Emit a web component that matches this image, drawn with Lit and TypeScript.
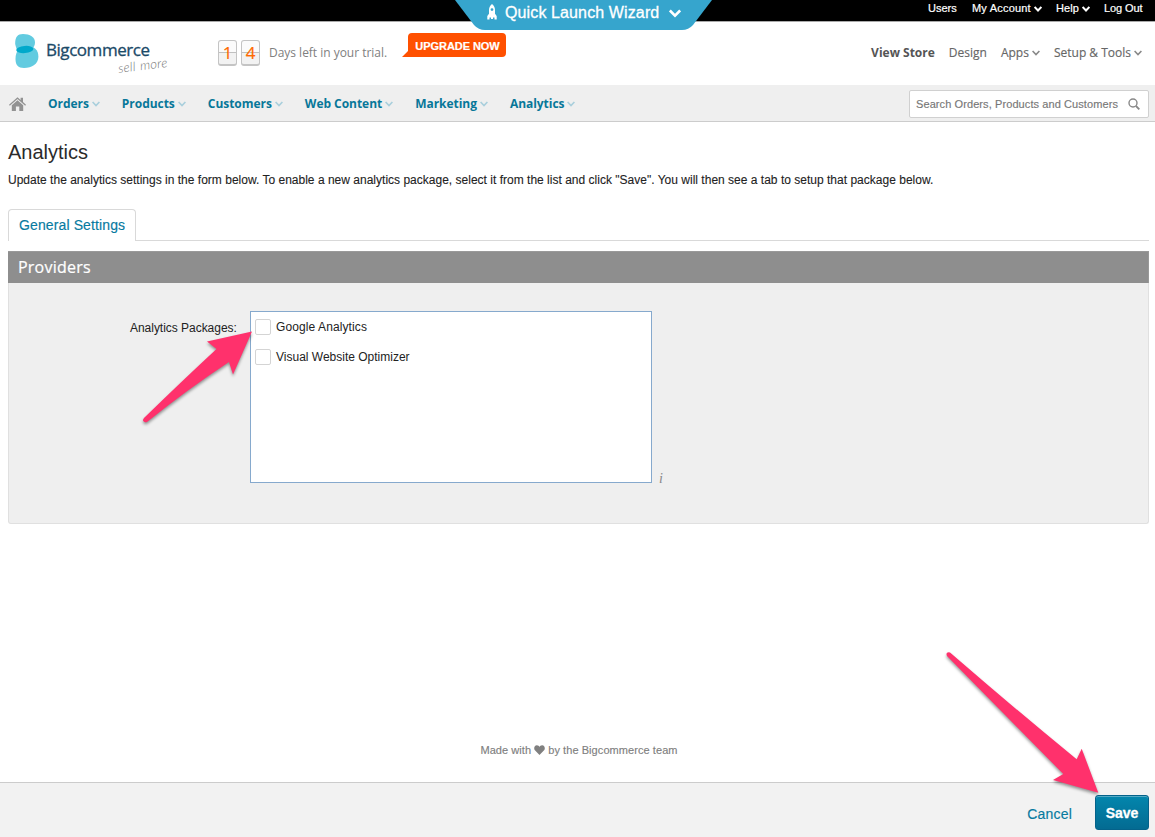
import { LitElement, html, css, svg } from "lit";
import { customElement, property } from "lit/decorators.js";

@customElement("chevron-icon")
class ChevronIcon extends LitElement {
  @property({ type: Number }) size = 8;
  @property({ type: Number }) weight = 2;
  static styles = css`
    :host { display: inline-flex; flex: none; }
    .stroke { fill: none; stroke: currentColor; }
  `;
  render() {
    return html`<svg width=${this.size} height=${this.size * 0.75} viewBox="0 0 8 6">
      <path class="stroke" stroke-width=${this.weight} d="M0.600 1 L4 4.500 L7.400 1" />
    </svg>`;
  }
}

@customElement("top-bar")
class TopBar extends LitElement {
  static styles = css`
    :host { display: block; position: relative; }
    .bar {
      height: 21px; background: #000; border-bottom: 1px solid #aaa; box-sizing: content-box;
      display: flex; justify-content: flex-end; gap: 14px; padding-right: 12px;
      font-size: 11px; line-height: 17px; color: #fff; -webkit-text-stroke: 0.2px #fff;
    }
    .item { display: flex; gap: 3px; white-space: nowrap; height: 17px; }
    .item chevron-icon { padding-top: 6px; }
    .users { width: 30px; }
    .account { width: 70px; }
    .account .label { letter-spacing: 0.2px; }
    .help { width: 34px; }
    .help .label { letter-spacing: 0.1px; }
    .logout { width: 39px; }
    .logout .label { letter-spacing: -0.1px; }
    .wizard {
      position: absolute; left: 455px; top: 0; width: 257px; height: 31px;
    }
    .shape { position: absolute; left: 0; top: 0; }
    .wizard-row {
      position: relative; display: flex; align-items: center; height: 26px; padding-left: 32px;
      color: #fff; font-size: 16px; letter-spacing: 0.12px; -webkit-text-stroke: 0.3px #fff;
    }
    .rocket { margin-right: 8px; margin-top: -3px; }
    .wizard-row chevron-icon { margin-left: 10px; padding-top: 1px; }
  `;
  render() {
    return html`
      <div class="bar">
        <div class="item users"><span class="label">Users</span></div>
        <div class="item account"><span class="label">My Account</span><chevron-icon size="8"></chevron-icon></div>
        <div class="item help"><span class="label">Help</span><chevron-icon size="8"></chevron-icon></div>
        <div class="item logout"><span class="label">Log Out</span></div>
      </div>
      <div class="wizard">
        <svg class="shape" width="257" height="31" viewBox="0 0 257 31">
          <path fill="#36a5cd" d="M0 0 H257 L238 25 Q233.500 30 227 30 H30 Q23.500 30 19 25 Z" />
        </svg>
        <div class="wizard-row">
          <svg class="rocket" width="10" height="16" viewBox="0 0 10 16">
            <path fill="#fff" fill-rule="evenodd" d="M5 0 C7 1.600 8 3.600 8 6 V9.700 L9.700 12 V15.500 H7.500 V13.600 H6 V15 H4 V13.600 H2.500 V15.500 H0.300 V12 L2 9.700 V6 C2 3.600 3 1.600 5 0 Z M5 4.200 A1.400 1.400 0 1 0 5 7 A1.400 1.400 0 1 0 5 4.200 Z" />
          </svg>
          <span>Quick Launch Wizard</span>
          <chevron-icon size="12" weight="1.700"></chevron-icon>
        </div>
      </div>
    `;
  }
}

@customElement("store-header")
class StoreHeader extends LitElement {
  static styles = css`
    :host {
      display: flex; height: 63px; box-sizing: border-box; background: #fff;
      font-family: "Open Sans", sans-serif; color: #666;
    }
    .logo { flex: none; width: 217px; display: flex; }
    .mark { flex: none; margin: 11px 0 0 14px; }
    .words { display: flex; flex-direction: column; padding: 16px 0 0 6px; }
    .name { font-size: 17px; line-height: 24px; color: #1b4a68; letter-spacing: -0.45px; -webkit-text-stroke: 0.3px #1b4a68; }
    .tag {
      font-family: "Lato", sans-serif; font-style: italic; font-weight: 300; font-size: 13px; line-height: 14px; color: #777;
      margin: -4px 0 0 72px; transform: rotate(-7deg); letter-spacing: 0.2px; word-spacing: 1px; white-space: nowrap;
    }
    .trial { display: flex; flex: none; width: 185px; padding: 18px 0 0 1px; box-sizing: border-box; }
    .digit {
      box-sizing: border-box; width: 19px; height: 26px; margin-right: 4px; border: 1px solid #c4c4c4; border-bottom-width: 2px;
      border-radius: 3px; background: linear-gradient(#fbfbfb 0 11px, #c0c0c0 11px 12px, #f2f2f2 12px);
      color: #ff6a00; font-size: 17px; line-height: 23px; text-align: center; -webkit-text-stroke: 0.2px #ff6a00;
    }
    .digit:last-of-type { margin-right: 0; }
    .left { font-size: 12px; line-height: 26px; padding-left: 9px; letter-spacing: -0.02px; white-space: nowrap; color: #808080; }
    .upgrade { position: relative; width: 105px; height: 25px; margin: 11px 0 0; }
    .bubble { display: block; }
    .upgrade-label {
      position: absolute; left: 7px; top: 0; width: 97px; height: 24px; text-align: center;
      font: bold 11px/26px "Liberation Sans", sans-serif; color: #fff; letter-spacing: -0.05px; white-space: nowrap;
      -webkit-text-stroke: 0.2px #fff;
    }
    .links { margin-left: auto; display: flex; padding: 22px 13px 0 0; gap: 14px; font-size: 12px; line-height: 18px; white-space: nowrap; }
    .link { display: flex; gap: 3px; -webkit-text-stroke: 0.15px #666; }
    .link chevron-icon { padding-top: 6px; color: #888; }
    .strong { font-weight: 700; color: #555; -webkit-text-stroke: 0; }
  `;
  render() {
    return html`
      <div class="logo">
        <svg class="mark" width="26" height="36" viewBox="0 0 26 36">
          <path fill="#62cbe0" d="M1.200 11 C1 4 3.500 1 9 1 C16 1 21 4 21 9.500 C21 15 16 19 9 19.500 C4 19.700 2.500 17 1.200 11 Z" />
          <path fill="#62cbe0" d="M1.500 26 C1.500 18 6 12.800 13 12.800 C20 12.800 24.400 17 24.400 23.500 C24.400 31 18 35 10 35 C4 35 1.500 32 1.500 26 Z" />
          <ellipse cx="10.800" cy="16.500" rx="8.600" ry="3.600" fill="#00a9cb" transform="rotate(-5 10.800 16.500)" />
        </svg>
        <div class="words"><span class="name">Bigcommerce</span><span class="tag">sell more</span></div>
      </div>
      <div class="trial">
        <div class="digit">1</div>
        <div class="digit">4</div>
        <span class="left">Days left in your trial.</span>
      </div>
      <div class="upgrade">
        <svg class="bubble" width="105" height="25" viewBox="0 0 105 25">
          <path fill="#ff5000" d="M6 4 Q6 0 10 0 H100 Q104 0 104 4 V20 Q104 24 100 24 H0 L6 18 Z" />
        </svg>
        <span class="upgrade-label">UPGRADE NOW</span>
      </div>
      <div class="links">
        <span class="link strong">View Store</span>
        <span class="link">Design</span>
        <span class="link">Apps<chevron-icon size="8" weight="1.600"></chevron-icon></span>
        <span class="link">Setup &amp; Tools<chevron-icon size="8" weight="1.600"></chevron-icon></span>
      </div>
    `;
  }
}

@customElement("main-nav")
class MainNav extends LitElement {
  static styles = css`
    :host {
      display: flex; align-items: center; height: 37px; box-sizing: border-box; background: #efefef;
      border-bottom: 1px solid #ccc; padding: 2px 6px 0 9px;
    }
    .home { flex: none; margin: 0 22px 0 0; }
    .items { display: flex; gap: 22px; font: bold 12px/18px "Open Sans", sans-serif; color: #077799; letter-spacing: -0.04px; }
    .item { display: flex; gap: 3px; white-space: nowrap; }
    .item chevron-icon { color: #a9cfdc; padding-top: 6px; }
    .search {
      margin-left: auto; width: 240px; height: 28px; box-sizing: border-box; border: 1px solid #d0d0d0; background: #fff;
      border-radius: 2px; display: flex; align-items: center; justify-content: space-between; padding: 0 8px 1px 6px;
      font-size: 11px; color: #777; letter-spacing: 0.09px; white-space: nowrap; -webkit-text-stroke: 0.15px #777;
    }
  `;
  render() {
    const items = ["Orders", "Products", "Customers", "Web Content", "Marketing", "Analytics"];
    return html`
      <svg class="home" width="17" height="14" viewBox="0 0 17 14">
        <path fill="#929292" d="M8.500 0.200 L11.600 3 V0.800 H14 V5.100 L17 7.800 L16.200 8.700 L8.500 2 L0.800 8.700 L0 7.800 Z" />
        <path fill="#929292" d="M8.500 3.200 L14.200 8.200 V14 H10.300 V9.600 H6.900 V14 H2.800 V8.200 Z" />
      </svg>
      <div class="items">
        ${items.map((label) => html`<div class="item">${label}<chevron-icon size="8" weight="1.700"></chevron-icon></div>`)}
      </div>
      <div class="search">
        <span>Search Orders, Products and Customers</span>
        <svg width="12" height="12" viewBox="0 0 12 12" fill="none" stroke="#888" stroke-width="1.400">
          <circle cx="5" cy="5" r="4" /><path d="M8 8 L11.300 11.300" stroke-width="1.800" />
        </svg>
      </div>
    `;
  }
}

@customElement("pointer-arrow")
class PointerArrow extends LitElement {
  @property() d = "";
  @property({ type: Number }) w = 0;
  @property({ type: Number }) h = 0;
  static styles = css`
    :host { display: block; }
    .arrow { display: block; overflow: visible; filter: drop-shadow(0 2px 1.5px rgba(0, 0, 0, 0.4)); }
  `;
  render() {
    return html`<svg class="arrow" width=${this.w} height=${this.h}>${svg`<path fill="#ff316c" d=${this.d} />`}</svg>`;
  }
}

@customElement("app-root")
class AppRoot extends LitElement {
  static styles = css`
    :host {
      display: flex; flex-direction: column; position: relative; width: 1155px; height: 837px; overflow: hidden;
      background: #fff; color: #222; font-family: "Liberation Sans", Arial, sans-serif; font-size: 12px;
    }
    top-bar { z-index: 1; }
    .content { flex: 1; padding: 18px 6px 0 8px; display: flex; flex-direction: column; }
    .title { margin: 0; font-size: 20px; line-height: 24px; font-weight: 400; color: #2b2b2b; }
    .intro { margin: 8px 0 0; line-height: 16px; white-space: nowrap; letter-spacing: 0.01px; -webkit-text-stroke: 0.1px #222; }
    .tabs { display: flex; height: 32px; margin-top: 21px; }
    .tab {
      box-sizing: border-box; width: 128px; height: 32px; border: 1px solid #d9d9d9; border-bottom: 0; border-radius: 4px 4px 0 0;
      font-size: 14px; line-height: 31px; padding-left: 10px; color: #077a9f; letter-spacing: 0.12px; white-space: nowrap;
      -webkit-text-stroke: 0.15px #077a9f;
    }
    .rule { flex: 1; border-bottom: 1px solid #d9d9d9; }
    .panel { margin-top: 10px; height: 273px; box-sizing: border-box; border: 1px solid #e0e0e0; border-top: 0; background: #efefef; border-radius: 0 0 3px 3px; }
    .panel-title {
      box-sizing: border-box; height: 32px; margin: 0 -1px; padding-left: 10px; background: #8e8e8e; color: #fff;
      border: 1px solid #999; border-width: 1px 1px 0 0; font: 16px/31px "Open Sans", sans-serif; letter-spacing: 0.22px;
      -webkit-text-stroke: 0.2px #fff;
    }
    .field { display: flex; padding: 28px 0 0 121px; }
    .field-label { width: 120px; line-height: 16px; padding-top: 9px; white-space: nowrap; letter-spacing: -0.03px; }
    .list { box-sizing: border-box; width: 402px; height: 172px; border: 1px solid #86a9cd; background: #fff; padding: 7px 0 0 4px; display: flex; flex-direction: column; gap: 14px; }
    .option { display: flex; align-items: center; height: 16px; gap: 5px; white-space: nowrap; }
    .box { box-sizing: border-box; width: 16px; height: 16px; border: 1px solid #d4d4d4; border-radius: 2px; background: #fff; }
    .wide { letter-spacing: 0.1px; }
    .info { align-self: flex-end; margin: 0 0 -4px 7px; font: italic 14px/16px "Liberation Serif", serif; color: #888; }
    .credit { margin: auto 0 25px; display: flex; justify-content: center; align-items: center; font-size: 11px; line-height: 14px; color: #808080; padding-left: 1px; letter-spacing: 0.07px; }
    .credit span { -webkit-text-stroke: 0.15px #808080; }
    .heart { margin: -1px 3px 0; }
    .actions { box-sizing: border-box; height: 55px; border-top: 1px solid #ccc; background: #f2f2f2; display: flex; justify-content: flex-end; align-items: center; gap: 23px; padding: 4px 6px 0 0; }
    .cancel { color: #077a9f; font-size: 14px; letter-spacing: 0.2px; padding-top: 3px; -webkit-text-stroke: 0.15px #077a9f; }
    .save {
      box-sizing: border-box; width: 54px; height: 35px; border: 1px solid #04628a; border-radius: 3px; color: #fff;
      background: linear-gradient(#0386ad, #036b92); box-shadow: inset 0 1px 0 #55aac5; font: bold 14px/33px "Liberation Sans", sans-serif;
      padding: 1px 0 0; -webkit-text-stroke: 0.3px #fff;
    }
    .to-option { position: absolute; left: 143px; top: 331px; }
    .to-save { position: absolute; left: 946px; top: 652px; }
  `;
  render() {
    return html`
      <top-bar></top-bar>
      <store-header></store-header>
      <main-nav></main-nav>
      <div class="content">
        <h1 class="title">Analytics</h1>
        <p class="intro">Update the analytics settings in the form below. To enable a new analytics package, select it from the list and click "Save". You will then see a tab to setup that package below.</p>
        <div class="tabs"><div class="tab">General Settings</div><div class="rule"></div></div>
        <div class="panel">
          <div class="panel-title">Providers</div>
          <div class="field">
            <span class="field-label">Analytics Packages:</span>
            <div class="list">
              <label class="option"><span class="box"></span><span class="wide">Google Analytics</span></label>
              <label class="option"><span class="box"></span><span>Visual Website Optimizer</span></label>
            </div>
            <span class="info">i</span>
          </div>
        </div>
        <div class="credit">
          <span>Made with</span>
          <svg class="heart" width="11" height="10" viewBox="0 0 11 10">
            <path fill="#808080" d="M5.500 10 L0.900 5.300 C-0.400 3.700 0 0.300 2.900 0.200 C4.300 0.200 5.100 1 5.500 1.900 C5.900 1 6.700 0.200 8.100 0.200 C11 0.300 11.400 3.700 10.100 5.300 Z" />
          </svg>
          <span>by the Bigcommerce team</span>
        </div>
      </div>
      <div class="actions">
        <span class="cancel">Cancel</span>
        <button class="save">Save</button>
      </div>
      <pointer-arrow class="to-option" w="109" h="92"
        d="M109 0.500 L90 43.500 L86 31 Q45 58 4 91 Q1 92 0 89.500 Q-0.200 88.500 1 87 Q40 49 73.500 18 L64 10.500 Z"></pointer-arrow>
      <pointer-arrow class="to-save" w="153" h="141"
        d="M152.300 140.700 L107 128 L117.300 122 Q58 62 1 4 Q0 2 1 0.800 Q2.500 -0.200 4 0.500 Q68 56 130.700 107.300 L135.700 96.700 Z"></pointer-arrow>
    `;
  }
}
